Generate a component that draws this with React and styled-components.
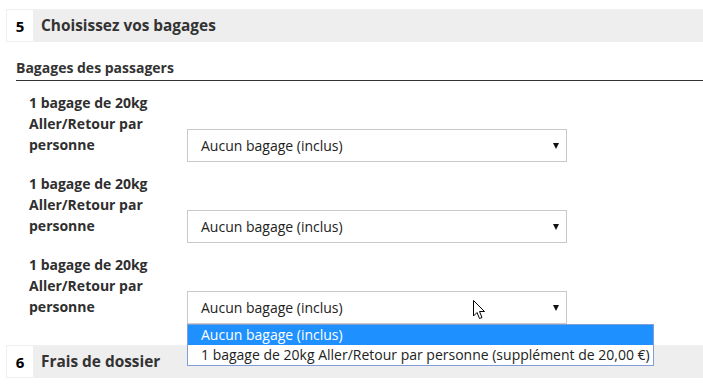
import React from 'react';
import styled, { createGlobalStyle } from 'styled-components';

const GlobalStyle = createGlobalStyle`
  body {
    margin: 0;
    background: #ffffff;
    font-family: "Open Sans", "Liberation Sans", sans-serif;
  }
`;

const Page = styled.div`
  position: relative;
  width: 703px;
  height: 387px;
  overflow: hidden;
  padding: 9px 0 0 6px;
  box-sizing: border-box;
`;

const SectionBar = styled.div`
  display: flex;
  align-items: stretch;
  height: 33px;
  padding: 1px 0 1px 1px;
  box-sizing: border-box;
  background: #eeeeee;
  margin-top: ${(p) => p.$gap || 0}px;
`;

const StepNum = styled.div`
  width: 26px;
  background: #ffffff;
  display: flex;
  align-items: center;
  justify-content: center;
  font-size: 15px;
  font-weight: 700;
  color: #000000;
`;

const StepTitle = styled.div`
  display: flex;
  align-items: center;
  margin-left: 8px;
  font-size: 15.4px;
  font-weight: 700;
  color: #333333;
`;

const Block = styled.div`
  padding-left: 10px;
`;

const SubHeading = styled.div`
  margin-top: 16px;
  line-height: 20px;
  padding-bottom: 2px;
  border-bottom: 1px solid #333333;
  font-size: 14px;
  font-weight: 700;
  color: #333333;
`;

const Row = styled.div`
  display: flex;
  align-items: flex-end;
  margin-top: 11px;
`;

const Label = styled.div`
  width: 171px;
  box-sizing: border-box;
  padding: 0 14px 7px 13px;
  font-size: 14px;
  line-height: 21px;
  font-weight: 700;
  color: #2f2f2f;
`;

const SelectWrap = styled.div`
  position: relative;
`;

const SelectBox = styled.div`
  width: 380px;
  height: 33px;
  box-sizing: border-box;
  border: 1px solid #c9c9c9;
  background: #ffffff;
  display: flex;
  align-items: center;
  justify-content: space-between;
  padding: 0 7px 0 13px;
  font-size: 14px;
  color: #222222;
`;

const Arrow = styled.span`
  width: 0;
  height: 0;
  border-left: 3px solid transparent;
  border-right: 3px solid transparent;
  border-top: 6px solid #111111;
  margin-top: 1px;
`;

const OptionList = styled.div`
  position: absolute;
  top: 33px;
  left: 0;
  z-index: 2;
  width: max-content;
  min-width: 380px;
  border: 1px solid #7f9fd6;
  background: #ffffff;
`;

const Option = styled.div`
  height: 20px;
  line-height: 20px;
  padding: 0 3px 0 13px;
  font-size: 14px;
  color: ${(p) => (p.$active ? '#ffffff' : '#222222')};
  background: ${(p) => (p.$active ? '#1e90ff' : 'transparent')};
  white-space: nowrap;
`;

const Cursor = styled.svg`
  position: absolute;
  left: 473px;
  top: 300px;
  z-index: 3;
`;

const choices = [
  'Aucun bagage (inclus)',
  '1 bagage de 20kg Aller/Retour par personne (supplément de 20,00 €)',
];

function BaggageRow({ open }) {
  return (
    <Row>
      <Label>1 bagage de 20kg Aller/Retour par personne</Label>
      <SelectWrap>
        <SelectBox>
          <span>{choices[0]}</span>
          <Arrow />
        </SelectBox>
        {open && (
          <OptionList>
            {choices.map((c, i) => (
              <Option key={c} $active={i === 0}>{c}</Option>
            ))}
          </OptionList>
        )}
      </SelectWrap>
    </Row>
  );
}

export default function App() {
  return (
    <>
      <GlobalStyle />
      <Page>
        <SectionBar>
          <StepNum>5</StepNum>
          <StepTitle>Choisissez vos bagages</StepTitle>
        </SectionBar>
        <Block>
          <SubHeading>Bagages des passagers</SubHeading>
          <BaggageRow />
          <BaggageRow />
          <BaggageRow open />
        </Block>
        <SectionBar $gap={21}>
          <StepNum>6</StepNum>
          <StepTitle>Frais de dossier</StepTitle>
        </SectionBar>
        <Cursor width="13" height="20" viewBox="0 0 13 20">
          <path
            d="M0.5 0.5 L0.5 16 L4 12.5 L6.5 18.5 L9 17.5 L6.5 11.5 L11.5 11.5 Z"
            fill="#ffffff"
            stroke="#000000"
            strokeWidth="1"
            strokeLinejoin="round"
          />
        </Cursor>
      </Page>
    </>
  );
}
